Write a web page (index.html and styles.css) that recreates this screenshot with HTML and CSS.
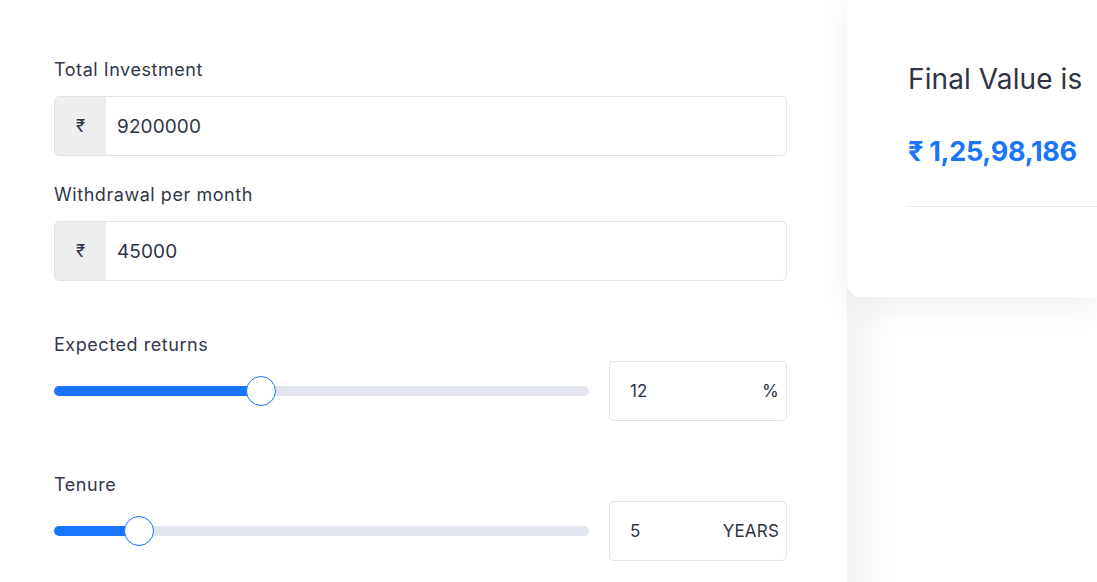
FILE: index.html
```html
<!DOCTYPE html>
<html>
<head>
<meta charset="utf-8">
<link rel="stylesheet" href="styles.css">
</head>
<body>
<div class="page">
  <div class="form">
    <div class="label">Total Investment</div>
    <div class="input-group">
      <div class="prefix">₹</div>
      <div class="value">9200000</div>
    </div>
    <div class="label label-second">Withdrawal per month</div>
    <div class="input-group">
      <div class="prefix">₹</div>
      <div class="value">45000</div>
    </div>
    <div class="label label-slider">Expected returns</div>
    <div class="slider-row">
      <div class="track">
        <div class="fill" style="width:38.7%"><span class="thumb"></span></div>
      </div>
      <div class="box"><span>12</span><span class="unit">%</span></div>
    </div>
    <div class="label label-slider">Tenure</div>
    <div class="slider-row">
      <div class="track">
        <div class="fill" style="width:15.9%"><span class="thumb"></span></div>
      </div>
      <div class="box"><span>5</span><span class="unit">YEARS</span></div>
    </div>
  </div>
  <div class="result">
    <div class="card">
      <div class="title">Final Value is</div>
      <div class="amount">₹ 1,25,98,186</div>
      <div class="divider"></div>
    </div>
  </div>
</div>
</body>
</html>
```

FILE: styles.css
```css
* { box-sizing: border-box; }
html, body { margin: 0; padding: 0; background: #fff; }
body {
  font-family: Inter, "Noto Sans", sans-serif;
  color: #2f3344;
  width: 1097px;
  height: 582px;
  overflow: hidden;
}
.page {
  display: flex;
  height: 582px;
}
.form {
  width: 787px;
  padding: 58px 0 0 54px;
  flex: none;
}
.label {
  font-size: 18px;
  line-height: 24px;
  height: 24px;
  margin-bottom: 14px;
  color: #33374a;
  letter-spacing: 0.55px;
}
.label-second { margin-top: 27px; }
.label-slider { margin-top: 52px; margin-bottom: 4px; }
.input-group {
  display: flex;
  height: 60px;
  border: 1px solid #e2e2e2;
  border-radius: 5px;
  overflow: hidden;
}
.prefix {
  width: 51px;
  background: #eeeeef;
  display: flex;
  align-items: center;
  justify-content: center;
  font-size: 17px;
  color: #2f3344;
  flex: none;
}
.value {
  display: flex;
  align-items: center;
  padding-left: 11px;
  font-size: 19px;
  letter-spacing: 0.1px;
  color: #2f3344;
}
.slider-row {
  display: flex;
  align-items: center;
  gap: 20px;
  height: 60px;
}
.track {
  flex: 1;
  height: 10px;
  border-radius: 5px;
  background: #e2e5ee;
  position: relative;
}
.fill {
  height: 10px;
  border-radius: 5px;
  background: #1976fb;
  position: relative;
}
.thumb {
  position: absolute;
  right: -15px;
  top: -10px;
  width: 30px;
  height: 30px;
  border-radius: 50%;
  background: #fff;
  border: 1px solid #1976fb;
}
.box {
  width: 178px;
  height: 60px;
  flex: none;
  border: 1px solid #e2e2e2;
  border-radius: 5px;
  display: flex;
  align-items: center;
  justify-content: space-between;
  padding: 0 7px 0 20px;
  font-size: 17px;
  color: #2f3344;
}
.unit { font-size: 17px; letter-spacing: 0.2px; }
.result {
  flex: 1;
  margin-left: 60px;
  background: linear-gradient(to right, #f3f4f5 0, #fafafb 25px, #fff 45px);
}
.card {
  background: #fff;
  border-bottom-left-radius: 14px;
  padding: 70px 0 90px 61px;
  box-shadow: 0 12px 30px rgba(20, 30, 50, 0.06);
  margin-top: -10px;
}
.title {
  font-size: 28px;
  line-height: 38px;
  color: #2f3344;
  letter-spacing: 0.1px;
}
.amount {
  margin-top: 35px;
  font-size: 27px;
  line-height: 38px;
  font-weight: 700;
  color: #1976fb;
  letter-spacing: -0.3px;
}
.divider {
  margin-top: 35px;
  height: 1px;
  background: #e4e6ea;
}
```
